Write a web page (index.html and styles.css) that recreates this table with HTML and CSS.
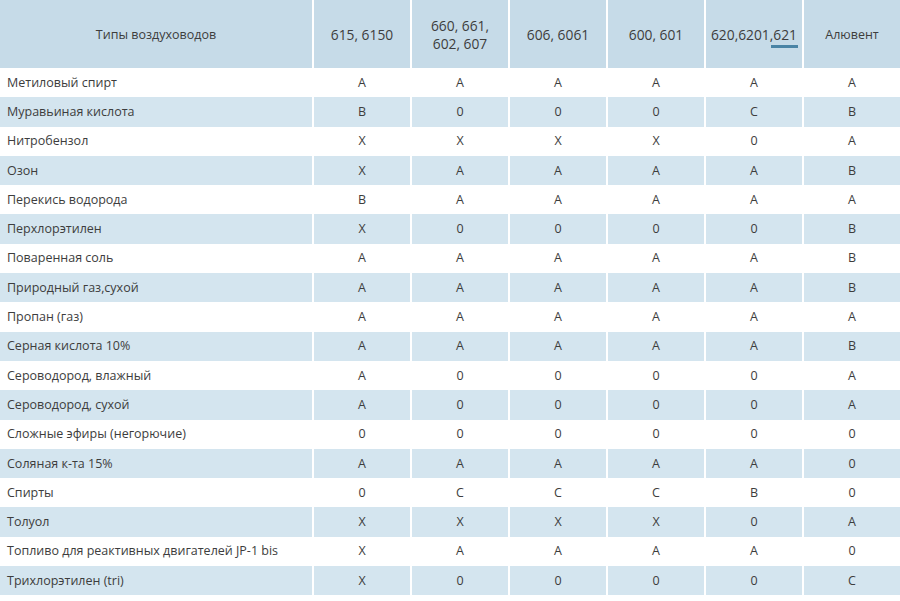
FILE: index.html
```html
<!DOCTYPE html>
<html lang="ru">
<head>
<meta charset="utf-8">
<title>Типы воздуховодов</title>
<link rel="stylesheet" href="styles.css">
</head>
<body>
<div class="table">
  <div class="row head">
    <div class="cell name">Типы воздуховодов</div>
    <div class="cell num">615, 6150</div>
    <div class="cell num">660, 661,<br>602, 607</div>
    <div class="cell num">606, 6061</div>
    <div class="cell num">600, 601</div>
    <div class="cell num">620,6201,<span class="mark">621</span></div>
    <div class="cell">Алювент</div>
  </div>
  <div class="row"><div class="cell name">Метиловый спирт</div><div class="cell">A</div><div class="cell">A</div><div class="cell">A</div><div class="cell">A</div><div class="cell">A</div><div class="cell">A</div></div>
  <div class="row alt"><div class="cell name">Муравьиная кислота</div><div class="cell">B</div><div class="cell">0</div><div class="cell">0</div><div class="cell">0</div><div class="cell">C</div><div class="cell">B</div></div>
  <div class="row"><div class="cell name">Нитробензол</div><div class="cell">X</div><div class="cell">X</div><div class="cell">X</div><div class="cell">X</div><div class="cell">0</div><div class="cell">A</div></div>
  <div class="row alt"><div class="cell name">Озон</div><div class="cell">X</div><div class="cell">A</div><div class="cell">A</div><div class="cell">A</div><div class="cell">A</div><div class="cell">B</div></div>
  <div class="row"><div class="cell name">Перекись водорода</div><div class="cell">B</div><div class="cell">A</div><div class="cell">A</div><div class="cell">A</div><div class="cell">A</div><div class="cell">A</div></div>
  <div class="row alt"><div class="cell name">Перхлорэтилен</div><div class="cell">X</div><div class="cell">0</div><div class="cell">0</div><div class="cell">0</div><div class="cell">0</div><div class="cell">B</div></div>
  <div class="row"><div class="cell name">Поваренная соль</div><div class="cell">A</div><div class="cell">A</div><div class="cell">A</div><div class="cell">A</div><div class="cell">A</div><div class="cell">B</div></div>
  <div class="row alt"><div class="cell name">Природный газ,сухой</div><div class="cell">A</div><div class="cell">A</div><div class="cell">A</div><div class="cell">A</div><div class="cell">A</div><div class="cell">B</div></div>
  <div class="row"><div class="cell name">Пропан (газ)</div><div class="cell">A</div><div class="cell">A</div><div class="cell">A</div><div class="cell">A</div><div class="cell">A</div><div class="cell">A</div></div>
  <div class="row alt"><div class="cell name">Серная кислота 10%</div><div class="cell">A</div><div class="cell">A</div><div class="cell">A</div><div class="cell">A</div><div class="cell">A</div><div class="cell">B</div></div>
  <div class="row"><div class="cell name">Сероводород, влажный</div><div class="cell">A</div><div class="cell">0</div><div class="cell">0</div><div class="cell">0</div><div class="cell">0</div><div class="cell">A</div></div>
  <div class="row alt"><div class="cell name">Сероводород, сухой</div><div class="cell">A</div><div class="cell">0</div><div class="cell">0</div><div class="cell">0</div><div class="cell">0</div><div class="cell">A</div></div>
  <div class="row"><div class="cell name">Сложные эфиры (негорючие)</div><div class="cell">0</div><div class="cell">0</div><div class="cell">0</div><div class="cell">0</div><div class="cell">0</div><div class="cell">0</div></div>
  <div class="row alt"><div class="cell name">Соляная к-та 15%</div><div class="cell">A</div><div class="cell">A</div><div class="cell">A</div><div class="cell">A</div><div class="cell">A</div><div class="cell">0</div></div>
  <div class="row"><div class="cell name">Спирты</div><div class="cell">0</div><div class="cell">C</div><div class="cell">C</div><div class="cell">C</div><div class="cell">B</div><div class="cell">0</div></div>
  <div class="row alt"><div class="cell name">Толуол</div><div class="cell">X</div><div class="cell">X</div><div class="cell">X</div><div class="cell">X</div><div class="cell">0</div><div class="cell">A</div></div>
  <div class="row"><div class="cell name">Топливо для реактивных двигателей JP-1 bis</div><div class="cell">X</div><div class="cell">A</div><div class="cell">A</div><div class="cell">A</div><div class="cell">A</div><div class="cell">0</div></div>
  <div class="row alt"><div class="cell name">Трихлорэтилен (tri)</div><div class="cell">X</div><div class="cell">0</div><div class="cell">0</div><div class="cell">0</div><div class="cell">0</div><div class="cell">C</div></div>
</div>
</body>
</html>
```

FILE: styles.css
```css
html, body {
  margin: 0;
  padding: 0;
  background: #ffffff;
}
body {
  font-family: "Open Sans", "Noto Sans", sans-serif;
  font-size: 12.5px;
  color: #3d3d3d;
}
.table {
  display: flex;
  flex-direction: column;
  width: 900px;
}
.row {
  display: grid;
  grid-template-columns: 312px repeat(6, 1fr);
  column-gap: 2px;
  height: 29.3px;
}
.row.head {
  height: 68px;
}
.cell {
  display: flex;
  align-items: center;
  justify-content: center;
  text-align: center;
  line-height: 16px;
}
.cell.name {
  justify-content: flex-start;
  padding-left: 7px;
  text-align: left;
}
.head .cell {
  background: #c6dbe8;
  line-height: 18px;
  padding-top: 2px;
}
.head .cell.num {
  font-size: 13.8px;
}
.head .cell.name {
  justify-content: center;
  padding-left: 0;
}
.alt .cell {
  background: #d4e5ef;
}
.mark {
  display: inline-block;
  position: relative;
}
.mark::after {
  content: "";
  position: absolute;
  left: -2px;
  right: -1px;
  bottom: -4px;
  height: 3px;
  background: #4a84a5;
}
```
